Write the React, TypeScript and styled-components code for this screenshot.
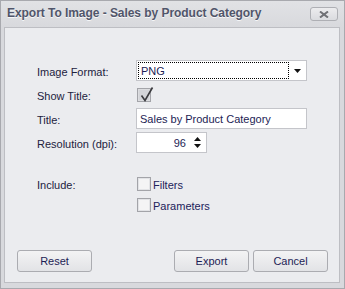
import React from 'react'
import styled, { createGlobalStyle } from 'styled-components'

const GlobalStyle = createGlobalStyle`
  html, body {
    margin: 0;
    padding: 0;
    background: #d8d9dd;
  }
  * {
    box-sizing: border-box;
  }
`

const Window = styled.div`
  width: 345px;
  height: 289px;
  display: flex;
  flex-direction: column;
  background: #d8d9dd;
  border: 1px solid #a8a9ae;
  font-family: 'Liberation Sans', Arial, sans-serif;
  font-size: 11px;
  color: #22223e;
`
const TitleBar = styled.div`
  height: 26px;
  flex: none;
  display: flex;
  align-items: center;
  justify-content: space-between;
  padding: 0 6px 2px 6px;
  background: linear-gradient(#e1e2e5, #d8d9dd);
`
const Caption = styled.div`
  font-weight: bold;
  font-size: 12px;
  letter-spacing: -0.05px;
  color: #50556a;
  text-shadow: 0 1px 0 rgba(255, 255, 255, 0.8);
`
const CloseButton = styled.div`
  width: 28px;
  height: 14px;
  margin-top: 2px;
  border: 1px solid #aeafb4;
  border-radius: 3px;
  background: linear-gradient(#ececee, #dadbdf);
  display: flex;
  align-items: center;
  justify-content: center;
`
const Body = styled.div`
  flex: 1;
  margin: 0 4px 5px 3px;
  display: flex;
  flex-direction: column;
  background: #ebecef;
  border: 1px solid #bdbec3;
`
const Form = styled.div`
  padding: 32px 0 0 32px;
`
const Grid = styled.div`
  display: grid;
  grid-template-columns: 99px 171px;
  grid-auto-rows: 21px;
  row-gap: 3px;
  align-items: center;
`
const Label = styled.div`
  height: 20px;
  padding-top: 2px;
  display: flex;
  align-items: center;
  white-space: nowrap;
`
const Field = styled.div<{ width?: number }>`
  width: ${({ width }) => width ?? 171}px;
  height: 21px;
  display: flex;
  align-items: center;
  background: #fff;
  border: 1px solid #c4c5ca;
  color: #1d1d55;
`
const FocusText = styled.div`
  flex: 1;
  height: 17px;
  margin: 0 0 0 1px;
  padding-left: 2px;
  display: flex;
  align-items: center;
  border: 1px dotted #000;
`
const Arrow = styled.div`
  width: 17px;
  display: flex;
  justify-content: center;
`
const TextValue = styled.div<{ right?: boolean }>`
  flex: 1;
  padding: 0 3px;
  text-align: ${({ right }) => (right ? 'right' : 'left')};
`
const SpinArrows = styled.div`
  width: 17px;
  display: flex;
  justify-content: center;
`
const Box = styled.div<{ checked?: boolean }>`
  position: relative;
  width: 14px;
  height: 14px;
  margin-left: 1px;
  border: 1px solid #a3a4a9;
  background: ${({ checked }) => (checked ? '#d3d4d8' : '#f4f4f5')};
  box-shadow: inset 0 0 0 1px ${({ checked }) => (checked ? '#dcdde0' : '#e2e3e6')};
`
const Tick = styled.svg`
  position: absolute;
  left: 1px;
  top: -3px;
`
const Include = styled.div`
  margin-top: 21px;
  display: grid;
  grid-template-columns: 99px auto;
  align-items: start;
`
const Options = styled.div`
  display: flex;
  flex-direction: column;
  gap: 1px;
`
const Option = styled.div`
  height: 20px;
  display: flex;
  align-items: center;
  gap: 2px;
`
const OptionLabel = styled.span`
  padding-top: 1px;
  color: #22225a;
`
const Footer = styled.div`
  margin-top: auto;
  display: flex;
  justify-content: space-between;
  padding: 0 11px 10px 12px;
`
const ButtonGroup = styled.div`
  display: flex;
  gap: 4px;
`
const Button = styled.div`
  width: 75px;
  height: 22px;
  display: flex;
  align-items: center;
  justify-content: center;
  border: 1px solid #abacb1;
  border-radius: 3px;
  background: linear-gradient(#f3f3f4, #e2e3e6);
  color: #1d1d55;
  font-size: 11px;
`

const CheckBox = ({ checked }: { checked?: boolean }) => (
  <Box checked={checked}>
    {checked && (
      <Tick width="15" height="17" viewBox="0 0 15 17">
        <path d="M2.5 9.5 L6 14.5 L13.5 1.5" fill="none" stroke="#3a3a3e" strokeWidth="1.6" />
      </Tick>
    )}
  </Box>
)

export default function App() {
  return (
    <>
      <GlobalStyle />
      <Window>
        <TitleBar>
          <Caption>Export To Image - Sales by Product Category</Caption>
          <CloseButton>
            <svg width="10" height="7" viewBox="0 0 10 7">
              <path d="M1 0.5 L9 6.5 M9 0.5 L1 6.5" stroke="#6f7075" strokeWidth="2" />
            </svg>
          </CloseButton>
        </TitleBar>
        <Body>
          <Form>
            <Grid>
              <Label>Image Format:</Label>
              <Field>
                <FocusText>PNG</FocusText>
                <Arrow>
                  <svg width="7" height="4" viewBox="0 0 7 4">
                    <path d="M0 0 H7 L3.5 4 Z" fill="#111" />
                  </svg>
                </Arrow>
              </Field>
              <Label>Show Title:</Label>
              <div>
                <CheckBox checked />
              </div>
              <Label>Title:</Label>
              <Field>
                <TextValue>Sales by Product Category</TextValue>
              </Field>
              <Label>Resolution (dpi):</Label>
              <Field width={71}>
                <TextValue right>96</TextValue>
                <SpinArrows>
                  <svg width="7" height="13" viewBox="0 0 7 13">
                    <path d="M3.5 1 L7 5 H0 Z" fill="#111" />
                    <path d="M0 8 H7 L3.5 12 Z" fill="#111" />
                  </svg>
                </SpinArrows>
              </Field>
            </Grid>
            <Include>
              <Label>Include:</Label>
              <Options>
                <Option>
                  <CheckBox />
                  <OptionLabel>Filters</OptionLabel>
                </Option>
                <Option>
                  <CheckBox />
                  <OptionLabel>Parameters</OptionLabel>
                </Option>
              </Options>
            </Include>
          </Form>
          <Footer>
            <Button>Reset</Button>
            <ButtonGroup>
              <Button>Export</Button>
              <Button>Cancel</Button>
            </ButtonGroup>
          </Footer>
        </Body>
      </Window>
    </>
  )
}
